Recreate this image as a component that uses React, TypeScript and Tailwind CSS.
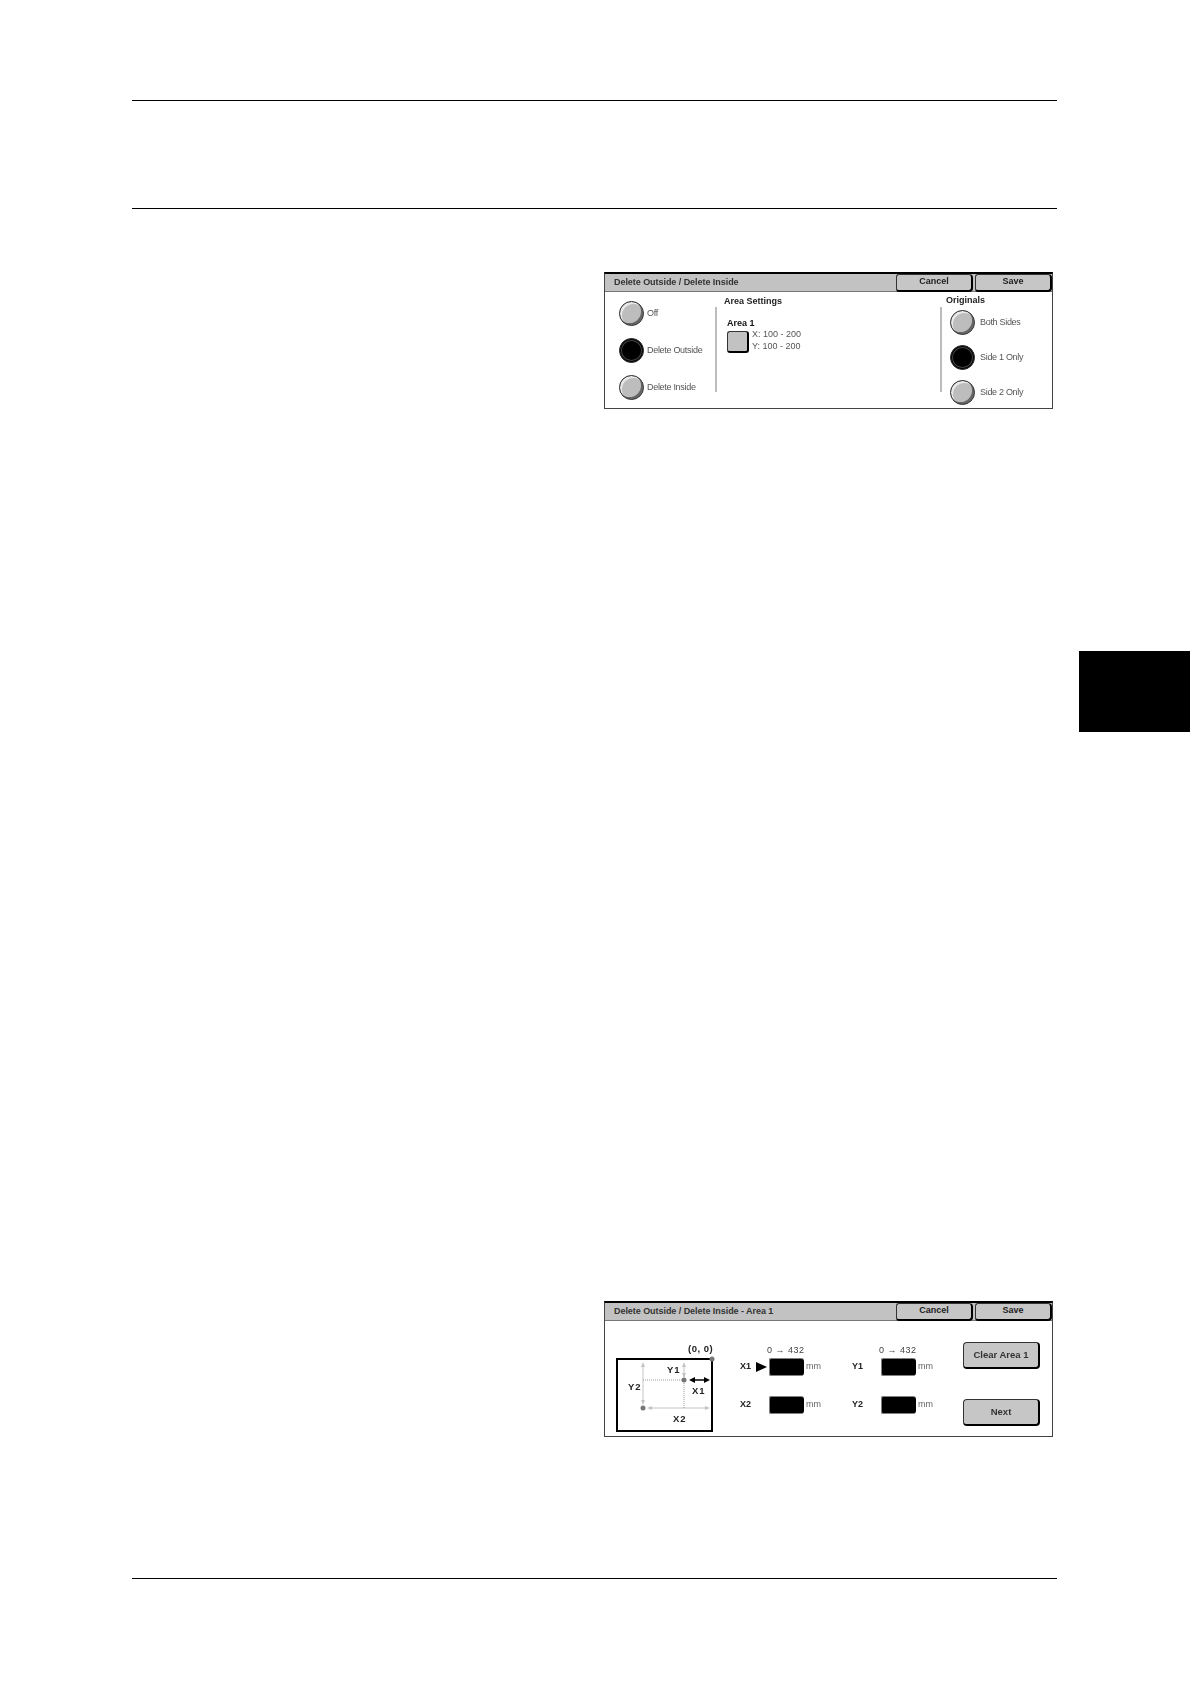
const font = "font-['Liberation_Sans',Arial,sans-serif]";

const Rule = ({ className = "" }: { className?: string }) => (
  <div className={`ml-[132px] h-px w-[925px] bg-black ${className}`} />
);

const Radio = ({ label, on = false, gap = "gap-[3px]" }: { label: string; on?: boolean; gap?: string }) => (
  <div className={`flex h-[25px] items-center ${gap}`}>
    <div
      className={`h-[25px] w-[25px] shrink-0 rounded-full border-[1.5px] border-[#2a2a2a] ${
        on
          ? "bg-black shadow-[inset_0_0_0_1px_#000,inset_0_0_0_2px_#444]"
          : "bg-[#bdbdbd] shadow-[inset_-2px_-2px_0_#666,inset_2px_2px_0_#e8e8e8]"
      }`}
    />
    <span className="whitespace-nowrap text-[9px] tracking-[-0.3px] text-[#555]">{label}</span>
  </div>
);

const HeaderButton = ({ label }: { label: string }) => (
  <div className="flex h-[18px] w-[77px] items-center justify-center rounded-[3px] rounded-r-[4px] border border-r-2 border-b-2 border-[#333] border-r-black border-b-black bg-[#c6c6c6] text-[9px] font-bold text-[#222]">
    {label}
  </div>
);

const PanelHeader = ({ title }: { title: string }) => (
  <div className="flex h-[18px] items-center justify-between border-b border-[#777] bg-[#c2c2c2] pl-[9px]">
    <span className="whitespace-nowrap text-[9px] font-bold tracking-[-0.05px] text-[#333]">{title}</span>
    <div className="flex gap-[2px]">
      <HeaderButton label="Cancel" />
      <HeaderButton label="Save" />
    </div>
  </div>
);

const Divider = () => <div className="mt-[15px] h-[85px] w-[2px] shrink-0 bg-[#bdbdbd]" />;

const Field = ({ label, arrow = false }: { label: string; arrow?: boolean }) => (
  <div className="flex h-[18px] items-center">
    <span className="w-[13px] text-[9px] font-bold text-[#222]">{label}</span>
    <span className="flex w-[16px] justify-center">
      {arrow && (
        <svg width="11" height="10" viewBox="0 0 11 10">
          <path d="M0 0 L11 5 L0 10 Z" fill="#000" />
        </svg>
      )}
    </span>
    <div className="h-[18px] w-[35px] rounded-l-[2px] rounded-r-[3px] border border-r-0 border-[#808080] bg-black" />
    <span className="ml-[2px] text-[9px] text-[#666]">mm</span>
  </div>
);

const Range = () => <div className="text-[9px] leading-[10px] tracking-[0.5px] text-[#444]">0 → 432</div>;

const BigButton = ({ label }: { label: string }) => (
  <div className="flex h-[27px] w-[77px] items-center justify-center rounded-[4px] border border-r-2 border-b-2 border-[#333] border-r-black border-b-black bg-[#c6c6c6] text-[9.5px] font-bold text-[#333]">
    {label}
  </div>
);

const Diagram = () => (
  <svg
    width="100"
    height="91"
    viewBox="0 -4 100 91"
    className="block"
    fontFamily="Liberation Sans, Arial, sans-serif"
    fontWeight="bold"
    fontSize="9.5"
    letterSpacing="1"
    fill="#222"
  >
    <text x="72" y="7" letterSpacing="0.5">(0, 0)</text>
    <rect x="1" y="14" width="95" height="72" fill="#fff" stroke="#000" strokeWidth="2" />
    <circle cx="96" cy="14" r="2.5" fill="#777" />
    <path d="M27 19 V58 M68 19 V32 M33 63 H92" stroke="#c4c4c4" strokeWidth="1" fill="none" />
    <path d="M27 17 l-2 5 h4 Z M27 60 l-2 -5 h4 Z M68 17 l-2 5 h4 Z M68 33 l-2 -5 h4 Z M31 63 l5 -2 v4 Z M94 63 l-5 -2 v4 Z" fill="#c4c4c4" />
    <path d="M27 35 H68 V63" stroke="#999" strokeWidth="1" strokeDasharray="1 1" fill="none" />
    <circle cx="68" cy="35" r="2.5" fill="#777" />
    <circle cx="27" cy="63" r="2.5" fill="#777" />
    <path d="M76 35 H91" stroke="#000" strokeWidth="1.5" />
    <path d="M73 35 l6 -3 v6 Z M94 35 l-6 -3 v6 Z" fill="#000" />
    <text x="51" y="28">Y1</text>
    <text x="12" y="45">Y2</text>
    <text x="76" y="49">X1</text>
    <text x="57" y="77">X2</text>
  </svg>
);

export default function App() {
  return (
    <div className={`flex h-[1684px] w-[1190px] flex-col overflow-hidden bg-white ${font}`}>
      <Rule className="mt-[100px]" />
      <Rule className="mt-[107px]" />

      <section className="mt-[63px] ml-[604px] h-[137px] w-[449px] border border-t-2 border-[#444] border-t-black blur-[0.3px]">
        <PanelHeader title="Delete Outside / Delete Inside" />
        <div className="flex h-[116px]">
          <div className="flex w-[110px] shrink-0 flex-col gap-[12px] pt-[9px] pl-[14px]">
            <Radio label="Off" />
            <Radio label="Delete Outside" on />
            <Radio label="Delete Inside" />
          </div>
          <Divider />
          <div className="w-[223px] shrink-0 pt-[4px] pl-[7px]">
            <div className="text-[9px] font-bold leading-[11px] text-[#222]">Area Settings</div>
            <div className="mt-[11px] ml-[3px] text-[9px] font-bold leading-[10px] text-[#111]">Area 1</div>
            <div className="ml-[3px] flex items-start gap-[3px]">
              <div className="mt-[3px] h-[22px] w-[22px] rounded-[3px] border border-r-2 border-b-2 border-[#333] border-r-black border-b-black bg-[#c2c2c2]" />
              <div className="text-[9px] leading-[12px] text-[#555]">
                <div>X: 100 - 200</div>
                <div>Y: 100 - 200</div>
              </div>
            </div>
          </div>
          <Divider />
          <div className="pt-[3px] pl-[4px]">
            <div className="text-[9px] font-bold leading-[11px] text-[#222]">Originals</div>
            <div className="mt-[4px] ml-[4px] flex flex-col gap-[10px]">
              <Radio label="Both Sides" gap="gap-[5px]" />
              <Radio label="Side 1 Only" on gap="gap-[5px]" />
              <Radio label="Side 2 Only" gap="gap-[5px]" />
            </div>
          </div>
        </div>
      </section>

      <div className="mt-[242px] ml-[1079px] h-[81px] w-[111px] bg-black" />

      <section className="mt-[569px] ml-[604px] h-[136px] w-[449px] border border-t-2 border-[#444] border-t-black blur-[0.3px]">
        <PanelHeader title="Delete Outside / Delete Inside - Area 1" />
        <div className="flex">
          <div className="mt-[20px] ml-[11px] w-[100px] shrink-0">
            <Diagram />
          </div>
          <div className="mt-[24px] ml-[24px] w-[112px] shrink-0">
            <div className="ml-[27px]"><Range /></div>
            <div className="mt-[3px]"><Field label="X1" arrow /></div>
            <div className="mt-[20px]"><Field label="X2" /></div>
          </div>
          <div className="mt-[24px] w-[111px] shrink-0">
            <div className="ml-[27px]"><Range /></div>
            <div className="mt-[3px]"><Field label="Y1" /></div>
            <div className="mt-[20px]"><Field label="Y2" /></div>
          </div>
          <div className="mt-[21px] flex flex-col gap-[30px]">
            <BigButton label="Clear Area 1" />
            <BigButton label="Next" />
          </div>
        </div>
      </section>

      <Rule className="mt-[141px]" />
    </div>
  );
}
